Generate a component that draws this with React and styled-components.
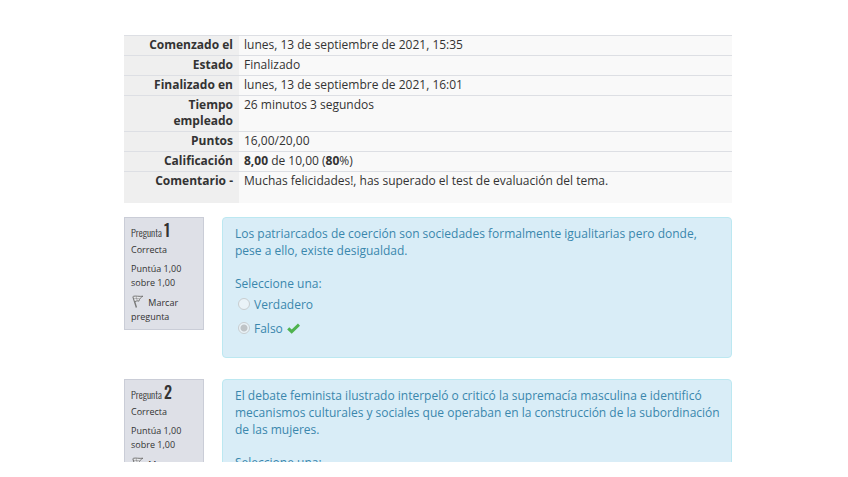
import React from "react";
import styled, { createGlobalStyle } from "styled-components";

const GlobalStyle = createGlobalStyle`
  *, *::before, *::after { box-sizing: border-box; }
  body {
    margin: 0;
    background: #fff;
    color: #333;
    font-family: "Open Sans", "Noto Sans", sans-serif;
    font-size: 12px;
    line-height: 17px;
  }
`;

const Page = styled.main`
  height: 100vh;
  padding: 35px 116px 15px 124px;
`;

const Review = styled.div`
  height: 100%;
  overflow: hidden;
`;

const Summary = styled.table`
  width: 100%;
  margin-bottom: 14px;
  border-collapse: separate;
  border-spacing: 0;
  line-height: 16px;
`;

const SummaryRow = styled.tr`
  vertical-align: top;

  &:last-child > * {
    padding-bottom: 14px;
  }
`;

const SummaryLabel = styled.th`
  width: 115px;
  padding: 1px 6px 2px ${({ $indent }) => ($indent ? "40px" : "0")};
  border-top: 1px solid #dddfe4;
  background: #efefef;
  font-weight: 700;
  text-align: right;
`;

const SummaryValue = styled.td`
  padding: 1px 5px 2px;
  border-top: 1px solid #dddfe4;
  background: #f9f9f9;
`;

const Question = styled.section`
  display: flex;
  align-items: flex-start;
  gap: 18px;
  margin-bottom: 21px;
`;

const Info = styled.aside`
  flex: 0 0 80px;
  padding: 2px 6px 5px;
  border: 1px solid #cacdd7;
  background: #dee0e7;
  font-size: 9px;
  line-height: 14px;
`;

const InfoTitle = styled.h3`
  height: 23px;
  margin: 0;
  font-family: "Oswald", "Liberation Sans Narrow", "Roboto Condensed", "Arial Narrow", sans-serif;
  font-size: 10px;
  font-weight: 300;
  line-height: 20px;
`;

const QuestionNumber = styled.span`
  font-size: 16px;
  font-weight: 500;
`;

const InfoText = styled.p`
  margin: 0 0 5px;
`;

const FlagButton = styled.button`
  display: block;
  padding: 0;
  border: 0;
  background: none;
  color: inherit;
  font: inherit;
  text-align: left;
  cursor: pointer;

  svg {
    margin: 0 2px 0 1px;
    vertical-align: -2px;
  }
`;

const Formulation = styled.div`
  flex: 1;
  min-width: 0;
  padding: 7px 6px 16px 12px;
  border: 1px solid #bce8f1;
  border-radius: 4px;
  background: #d9edf7;
  color: #3a87ad;
`;

const QuestionText = styled.p`
  margin: 0 0 16px;
`;

const Answers = styled.fieldset`
  margin: 0;
  padding: 0;
  border: 0;
`;

const Prompt = styled.legend`
  padding: 0 0 1px;
`;

const Answer = styled.div`
  display: flex;
  align-items: center;
  gap: 4px;
  padding: 3px 0 4px 3px;

  svg {
    display: block;
  }
`;

const Radio = styled.input`
  appearance: none;
  width: 12px;
  height: 12px;
  margin: 0 0 2px;
  border: 1px solid #c8cdd0;
  border-radius: 50%;
  background: #eaf3f8;

  &:checked {
    background: radial-gradient(circle, #bfc4c7 0 3px, #eaf3f8 4px);
  }
`;

function FlagIcon() {
  return (
    <svg width="12" height="13" viewBox="0 0 12 13" fill="none" stroke="#777" aria-hidden="true">
      <path d="M1 1.5 4.4 12.5" strokeWidth="1.4" />
      <path d="M1.2 1.3C4 .6 7 1.8 11 1.2C8.5 2.5 7.5 4 6.8 6.2C5.5 5.6 4.5 5.8 3 6.6" fill="#e8e9ec" />
      <path d="M4 1.5 5.2 5.5M2 3.8C4 3 5.5 4 7.5 3.6" strokeWidth=".5" />
    </svg>
  );
}

function CheckIcon() {
  return (
    <svg width="13" height="11" viewBox="0 0 13 11" role="img" aria-label="Correcta">
      <path d="M1.2 5.4 4.7 8.7 12 1.7" fill="none" stroke="#4fb34f" strokeWidth="3" />
    </svg>
  );
}

const summary = [
  { label: "Comenzado el", value: "lunes, 13 de septiembre de 2021, 15:35" },
  { label: "Estado", value: "Finalizado" },
  { label: "Finalizado en", value: "lunes, 13 de septiembre de 2021, 16:01" },
  { label: "Tiempo empleado", value: "26 minutos 3 segundos", indent: true },
  { label: "Puntos", value: "16,00/20,00" },
  { label: "Calificación", value: <><b>8,00</b> de 10,00 (<b>80</b>%)</> },
  { label: "Comentario -", value: "Muchas felicidades!, has superado el test de evaluación del tema." },
];

const questions = [
  {
    number: 1,
    text: "Los patriarcados de coerción son sociedades formalmente igualitarias pero donde, pese a ello, existe desigualdad.",
    selected: "Falso",
  },
  {
    number: 2,
    text: "El debate feminista ilustrado interpeló o criticó la supremacía masculina e identificó mecanismos culturales y sociales que operaban en la construcción de la subordinación de las mujeres.",
    selected: null,
  },
];

function QuestionReview({ number, text, selected }) {
  return (
    <Question>
      <Info>
        <InfoTitle>
          Pregunta <QuestionNumber>{number}</QuestionNumber>
        </InfoTitle>
        <InfoText>Correcta</InfoText>
        <InfoText>Puntúa 1,00 sobre 1,00</InfoText>
        <FlagButton type="button">
          <FlagIcon /> Marcar pregunta
        </FlagButton>
      </Info>
      <Formulation>
        <QuestionText>{text}</QuestionText>
        <Answers>
          <Prompt>Seleccione una:</Prompt>
          {["Verdadero", "Falso"].map((option) => {
            const id = `q${number}-${option}`;
            return (
              <Answer key={option}>
                <Radio type="radio" id={id} name={`q${number}`} defaultChecked={option === selected} disabled />
                <label htmlFor={id}>{option}</label>
                {option === selected && <CheckIcon />}
              </Answer>
            );
          })}
        </Answers>
      </Formulation>
    </Question>
  );
}

export default function App() {
  return (
    <>
      <GlobalStyle />
      <Page>
        <Review>
          <Summary>
            <tbody>
              {summary.map(({ label, value, indent }) => (
                <SummaryRow key={label}>
                  <SummaryLabel scope="row" $indent={indent}>{label}</SummaryLabel>
                  <SummaryValue>{value}</SummaryValue>
                </SummaryRow>
              ))}
            </tbody>
          </Summary>
          {questions.map((question) => (
            <QuestionReview key={question.number} {...question} />
          ))}
        </Review>
      </Page>
    </>
  );
}
